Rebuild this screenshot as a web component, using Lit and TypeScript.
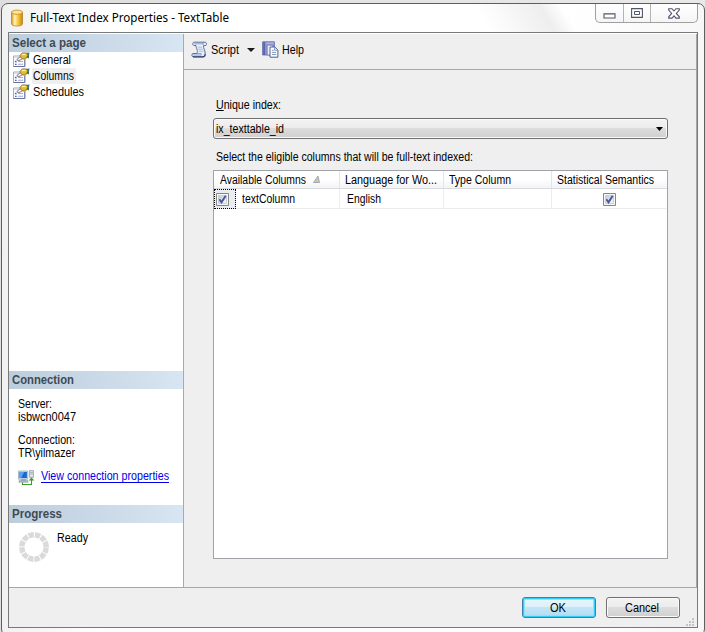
import { LitElement, html, css, svg } from "lit";
import { customElement, property } from "lit/decorators.js";

/** A one-line caption, condensed horizontally so that it fills `span` pixels. */
@customElement("ui-text")
class UiText extends LitElement {
  @property({ type: Number }) span = 0;
  static styles = css`
    :host { display: inline-block; white-space: pre; }
    .run { display: inline-block; transform-origin: 0 50%; }
  `;
  render() {
    return html`<span class="run"><slot></slot></span>`;
  }
  firstUpdated() {
    const run = this.renderRoot.querySelector(".run") as HTMLElement;
    const width = run.getBoundingClientRect().width;
    if (!this.span || !width) return;
    run.style.transform = `scaleX(${this.span / width})`;
    run.style.marginRight = `${this.span - width}px`;
  }
}

const cylinder = svg`<svg width="14" height="18" viewBox="0 0 14 18">
  <defs><linearGradient id="g" x1="0" x2="1" y1="0" y2="0"><stop offset="0" stop-color="#d99a1c"/><stop offset=".3" stop-color="#fff3b4"/><stop offset=".6" stop-color="#f8c63a"/><stop offset="1" stop-color="#c98510"/></linearGradient></defs>
  <path d="M1.5 3.2V14.8C1.5 16.2 3.8 17 7 17S12.5 16.2 12.5 14.8V3.2Z" fill="url(#g)" stroke="#b98428" stroke-width=".8"/>
  <ellipse cx="7" cy="3.2" rx="5.5" ry="2.1" fill="#fbe39a" stroke="#c08a20" stroke-width=".8"/></svg>`;

const pageIcon = svg`<svg width="17" height="16" viewBox="0 0 17 16">
  <path d="M.5 4H11.8V14.5H.5Z" fill="#fafbff" stroke="#a3abc6"/>
  <path d="M.5 14.5H11.8V8" fill="none" stroke="#68749c"/>
  <path d="M1 5.3H6" stroke="#d5dbec" stroke-width="1.4"/>
  <path d="M2 9.5h1.6M2 12.3h1.6" stroke="#5560b8" stroke-width="1.3"/><path d="M5 9.5h5M5 12.3h5" stroke="#a3abdc" stroke-width="1.1"/>
  <path d="M3.8 7.6L8 4 10.2 6.2 7 8.2 5 8.4Z" fill="#fff" stroke="#555" stroke-width=".8"/>
  <path d="M6.8 3.6L9.2 .9H13.5L15.2 3.4 12.6 7H10.2L7.8 5.6Z" fill="#e8b830" stroke="#8a6a16" stroke-width=".8"/>
  <path d="M8.8 2.5H12.6" stroke="#fff0a0" stroke-width="1.3"/>
  <path d="M13.4 1H16V6.6L13.2 5.2 14.8 3.2Z" fill="#3d7a36"/><path d="M14.3.6H16.4V2.6H15Z" fill="#3f78d0"/></svg>`;

const scriptIcon = svg`<svg width="17" height="17" viewBox="0 0 17 17">
  <path d="M3.2 1.2H14C16 1.3 16 4.6 14.2 4.6H12.6C11.7 7 14.8 9.8 14.2 13.2 14 15.2 12.8 15.8 11.8 15.8H2C.6 15.8.4 12.6 2 12.5H5.8C7.6 9.8 4.7 6.7 5 4.5H3.2C1.2 4.5 1.2 1.3 3.2 1.2Z" fill="#e6eefb" stroke="#5b6c96"/>
  <path d="M2 15.8H11.8C12.8 15.8 14 15.2 14.2 13.2" fill="none" stroke="#33466f" stroke-width="1.3"/>
  <path d="M3.2 2.8H12.2M12.6 4.6C11.6 3.8 12 1.8 13.6 1.4M2.2 14H10.4C9.8 13.4 10 12.8 10 12.5H5.8" fill="none" stroke="#8498c4" stroke-width=".9"/>
  <path d="M6.8 6.2H11M7.2 8.2H11.6M8 10.2H12.4" stroke="#a5b7dc" stroke-width=".9"/></svg>`;

const helpIcon = svg`<svg width="17" height="17" viewBox="0 0 17 17">
  <path d="M.6.8H12.4V14H.6Z" fill="#8c92cc" stroke="#6a70ae" stroke-width=".9"/>
  <path d="M1.2 1.2H3V14H1.2Z" fill="#5d64aa"/><path d="M4.2 1.5H11.8V3H4.2Z" fill="#b0b5e0"/>
  <path d="M5.3 4.2H9.6L11 5.8V14H5.3Z" fill="#eef2fb" stroke="#7c88b0" stroke-width=".8"/>
  <path d="M8 6H12.8L15.9 9V16.2H8Z" fill="#f8fbff" stroke="#4e6190" stroke-width="1"/>
  <path d="M12.6 6.2V9.2H15.6M10 9.3H11.6M10 11.4H14.2M10 13.5H14.2" fill="none" stroke="#7b90b8" stroke-width=".9"/></svg>`;

const serverIcon = svg`<svg width="17" height="16" viewBox="0 0 17 16">
  <path d="M.5 1H9.8V9.2H.5Z" fill="#cfd9e8" stroke="#9aa8be" stroke-width=".8"/>
  <path d="M1.5 2H8.9V8H1.5Z" fill="#1a68cc"/><path d="M1.5 2H6.2L3.2 8H1.5Z" fill="#56a4f0"/>
  <path d="M3 9.4H8V10.6H3Z" fill="#8290a8"/><path d="M1 10.7H10V12.2H1Z" fill="#b9c5d8" stroke="#7d8ba3" stroke-width=".6"/>
  <path d="M11.6.6H15.4V7.4H11.6Z" fill="#e6ebf2" stroke="#8c96a6" stroke-width=".8"/><path d="M12.2 2.4H14.8M12.2 4H14.8" stroke="#8c97a8" stroke-width=".7"/>
  <path d="M4.5 12.4V14.5H13.5V9.4" fill="none" stroke="#3f9b28" stroke-width="1.1"/><path d="M10.6 10.6L13.5 7.4 16.4 10.6Z" fill="#3f9b28"/></svg>`;

const check = svg`<svg class="check" width="13" height="13" viewBox="0 0 13 13">
  <defs><linearGradient id="c" x1="0" y1="0" x2="1" y2="1"><stop offset="0" stop-color="#c4cad2"/><stop offset="1" stop-color="#f8f8f9"/></linearGradient></defs>
  <path d="M.5.5H12.5V12.5H.5Z" fill="#f7f7f7" stroke="#868686"/><path d="M2.5 2.5H10.5V10.5H2.5Z" fill="url(#c)" stroke="#ccd0d5"/>
  <path d="M3.4 6.3L5.5 9.3 9.7 2.8" fill="none" stroke="#4257a0" stroke-width="1.9"/></svg>`;

const spinner = svg`<svg width="30" height="30" viewBox="0 0 30 30">
  <circle cx="15" cy="15" r="12.2" fill="none" stroke="#dadada" stroke-width="5.4" stroke-dasharray="5.38 1.008" stroke-dashoffset="-.5"/></svg>`;

const minGlyph = svg`<svg width="13" height="6" viewBox="0 0 13 6"><path d="M1 .9H12V5H1Z" fill="#fff" stroke="#52566a" stroke-width="1.1"/></svg>`;
const maxGlyph = svg`<svg width="12" height="10" viewBox="0 0 12 10"><path d="M.6.6H11.4V9.4H.6Z" fill="#fff" stroke="#52566a" stroke-width="1.1"/><path d="M3.5 3.5H8.5V6.5H3.5Z" fill="#fff" stroke="#52566a"/></svg>`;
const closeGlyph = svg`<svg width="12" height="11" viewBox="0 0 12 11"><path d="M.7.7H4L6 3 8 .7H11.3V2L8.3 5.4 11.3 8.8V10.1H8L6 7.8 4 10.1H.7V8.8L3.7 5.4.7 2Z" fill="#fff" stroke="#52566a" stroke-width="1.1"/></svg>`;
const grip = svg`<svg class="grip" width="9" height="9" viewBox="0 0 9 9"><path d="M6 0h2v2H6zM3 3h2v2H3zM6 3h2v2H6zM0 6h2v2H0zM3 6h2v2H3zM6 6h2v2H6z" fill="#c2c2c2"/></svg>`;

@customElement("app-root")
class AppRoot extends LitElement {
  static styles = css`
    * { box-sizing: border-box; }
    :host {
      display: block; width: 705px; height: 632px; overflow: hidden; padding: 3px 0 0 1px;
      background: linear-gradient(90deg, #dedede, #e9e9e9);
      font: 12px/16px "Liberation Sans", Arial, sans-serif; color: #000;
    }
    svg { display: block; flex: none; }
    .window {
      width: 704px; height: 633px; border: 1px solid #5c5e60; border-radius: 7px; padding: 0 6px;
      background: linear-gradient(58deg, transparent 0 68%, #eeeeee 77%, transparent 80%) 0 0 / 100% 30px no-repeat, linear-gradient(90deg, #f1f1f1, #fff 14%, #fff 80%, #f7f7f7);
    }
    .titlebar { height: 28px; display: flex; align-items: flex-start; }
    .titlebar .logo { padding: 5px 0 0 2px; }
    .title { font: 12px/18px "Noto Sans", "Open Sans", sans-serif; padding: 5px 0 0 6px; flex: 1; }
    .caption { display: flex; width: 103px; height: 19px; border: 1px solid #a0a0a0; border-top: 0; border-radius: 0 0 5px 5px; background: linear-gradient(#fff, #f5f5f5); }
    .cap { display: flex; align-items: center; justify-content: center; border-right: 1px solid #b4b4b4; width: 28px; }
    .cap.max { width: 27px; }
    .cap.close { flex: 1; border: 0; }
    .cap.min { padding-top: 5px; }
    .client { width: 690px; height: 596px; border: 1px solid #77797b; background: #efefef; display: flex; flex-direction: column; }
    .body { display: flex; height: 555px; border-bottom: 1px solid #a5a7aa; border-top: 1px solid #fff; }
    .side { width: 175px; background: #fff; border-right: 1px solid #a7a9ac; display: flex; flex-direction: column; }
    .head { height: 18px; line-height: 18px; padding-left: 3px; font-weight: bold; color: #3f4a54; background: linear-gradient(90deg, #bccddb, #d8e5f3); }
    .pages { height: 319px; }
    .page { display: flex; align-items: center; height: 16px; padding-left: 4px; }
    .page .name { margin-left: 2px; padding: 0 2px 0 1px; height: 16px; }
    .page .name.on { background: #efefef; }
    .conn { height: 116px; padding: 9px 0 0 9px; line-height: 13px; }
    .pair { display: flex; flex-direction: column; align-items: flex-start; height: 36px; }
    .link { display: flex; gap: 6px; color: #0000f0; }
    .link .name { border-bottom: 1px solid #0000f0; height: 13px; line-height: 13px; }
    .progress { display: flex; gap: 8px; padding: 7px 0 0 10px; }
    .progress svg { margin-top: 2px; }
    .main { flex: 1; display: flex; flex-direction: column; border-right: 1px solid #a5a7aa; }
    .tools { height: 36px; border-bottom: 1px solid #a5a7aa; display: flex; align-items: center; padding: 0 0 4px 7px; }
    .tools .t1 { margin-left: 3px; }
    .tools .drop { margin: 1px 7px 0 8px; }
    .tools .t2 { margin-left: 3px; }
    .form { padding: 27px 28px 0 29px; display: flex; flex-direction: column; align-items: flex-start; }
    .cue { padding-left: 3px; height: 21px; }
    .combo { width: 455px; height: 21px; border: 1px solid #6f6f6f; border-radius: 3px; box-shadow: inset 0 0 0 1px #fafafa; background: linear-gradient(#f3f3f3, #ebebeb 49%, #dddddd 50%, #cfcfcf); display: flex; align-items: center; justify-content: space-between; padding: 0 4px 0 2px; margin-bottom: 10px; }
    .grid { width: 455px; height: 389px; border: 1px solid #a0a3a8; background: #fff; }
    .row { display: grid; grid-template-columns: 126px 104px 108px 115px; }
    .row.top { height: 18px; background: linear-gradient(#fff 45%, #f3f4f6); border-bottom: 1px solid #d8dade; }
    .row.top .cell { border-right: 1px solid #e1e4e8; padding-left: 5px; display: flex; align-items: center; height: 17px; }
    .row.top .cell:first-child { padding-left: 6px; }
    .row.top .cell:last-child, .row.item .cell:last-child { border-right-color: transparent; }
    .row.top .cell svg { margin-left: 7px; }
    .row.item { height: 20px; }
    .row.item .cell { display: flex; align-items: center; height: 20px; border-right: 1px solid #ededed; border-bottom: 1px solid #ededed; padding-left: 7px; }
    .row.item .cell.first { padding-left: 0; }
    .row.item .cell.mid { justify-content: center; padding: 1px 0 0 1px; }
    .focus { width: 22px; height: 20px; border: 1px dotted #000; background: #e9edf2; display: flex; align-items: center; padding: 1px 0 0 1px; margin-right: 6px; }
    .foot { flex: 1; display: flex; gap: 10px; justify-content: flex-end; padding: 9px 2px 0 0; }
    .btn { width: 74px; height: 21px; border: 1px solid #707070; border-radius: 3px; box-shadow: inset 0 0 0 1px #fafafa; background: linear-gradient(#f3f3f3, #ebebeb 49%, #dddddd 50%, #cfcfcf); display: flex; align-items: center; justify-content: center; padding-right: 2px; }
    .btn.main-btn { border-color: #3c7fb1; box-shadow: inset 0 0 0 1px #30cdf8, inset 0 0 0 2px #8de5fb; background: linear-gradient(#e9f5fc, #dcf0fb 49%, #c4e5f6 50%, #b0dcf3); }
    .grip { align-self: flex-end; margin-left: -4px; }
  `;

  pages = [
    { name: "General", span: 38 },
    { name: "Columns", span: 41, on: true },
    { name: "Schedules", span: 51 },
  ];

  render() {
    return html`<div class="window">
      <div class="titlebar">
        <div class="logo">${cylinder}</div>
        <div class="title"><ui-text span="199">Full-Text Index Properties - TextTable</ui-text></div>
        <div class="caption"><div class="cap min">${minGlyph}</div><div class="cap max">${maxGlyph}</div><div class="cap close">${closeGlyph}</div></div>
      </div>
      <div class="client">
        <div class="body">
          <div class="side">
            <div class="head"><ui-text span="74">Select a page</ui-text></div>
            <div class="pages">${this.pages.map((p) => html`<div class="page">${pageIcon}<ui-text class="name ${p.on ? "on" : ""}" span=${p.span}>${p.name}</ui-text></div>`)}</div>
            <div class="head"><ui-text span="62">Connection</ui-text></div>
            <div class="conn">
              <div class="pair"><ui-text span="34">Server:</ui-text><ui-text span="58">isbwcn0047</ui-text></div>
              <div class="pair"><ui-text span="57">Connection:</ui-text><ui-text span="57">TR\\yilmazer</ui-text></div>
              <div class="link">${serverIcon}<ui-text class="name" span="128">View connection properties</ui-text></div>
            </div>
            <div class="head"><ui-text span="50">Progress</ui-text></div>
            <div class="progress">${spinner}<ui-text span="31">Ready</ui-text></div>
          </div>
          <div class="main">
            <div class="tools">${scriptIcon}<ui-text class="t1" span="28">Script</ui-text>
              <svg class="drop" width="8" height="4" viewBox="0 0 8 4"><path d="M0 0H8L4 4Z" fill="#1a1a1a"/></svg>
              ${helpIcon}<ui-text class="t2" span="22">Help</ui-text></div>
            <div class="form">
              <div class="cue"><ui-text span="65"><u>U</u>nique index:</ui-text></div>
              <div class="combo"><ui-text span="68">ix_texttable_id</ui-text><svg width="7" height="4" viewBox="0 0 7 4"><path d="M0 0H7L3.5 4Z"/></svg></div>
              <div class="cue"><ui-text span="257">Select the eli<u>g</u>ible columns that will be full-text indexed:</ui-text></div>
              <div class="grid">
                <div class="row top">
                  <div class="cell"><ui-text span="86">Available Columns</ui-text><svg width="7" height="7" viewBox="0 0 7 7"><path d="M5 0L6.5 6.5H.5Z" fill="#c5c5c5" stroke="#929292" stroke-width=".7"/></svg></div>
                  <div class="cell"><ui-text span="92">Language for Wo...</ui-text></div>
                  <div class="cell"><ui-text span="62">Type Column</ui-text></div>
                  <div class="cell"><ui-text span="97">Statistical Semantics</ui-text></div>
                </div>
                <div class="row item">
                  <div class="cell first"><div class="focus">${check}</div><ui-text span="53">textColumn</ui-text></div>
                  <div class="cell"><ui-text span="34">English</ui-text></div>
                  <div class="cell"></div>
                  <div class="cell mid">${check}</div>
                </div>
              </div>
            </div>
          </div>
        </div>
        <div class="foot"><div class="btn main-btn"><ui-text span="16">OK</ui-text></div><div class="btn"><ui-text span="34">Cancel</ui-text></div>${grip}</div>
      </div>
    </div>`;
  }
}
